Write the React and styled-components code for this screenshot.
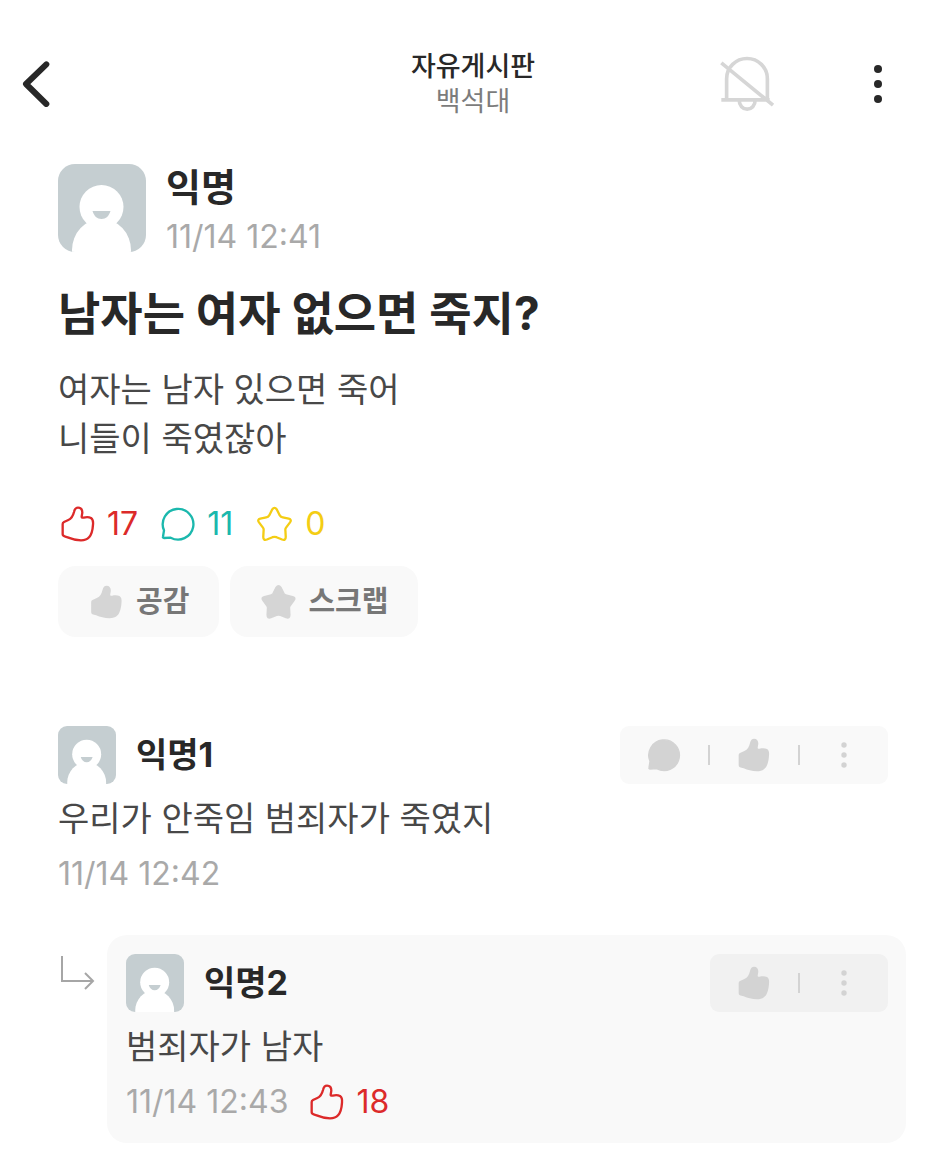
import React from "react";
import styled, { createGlobalStyle } from "styled-components";

const THUMB = "M5 54 Q5 50 9 48 L22 42 C32 38 36 30 39 18 C41 9 45 5 51 5 C60 5 64 11 64 20 L62 32 C62 35 64 35 68 35 C75 33 84 33 90 36 C96 40 97 46 96 56 C95 72 91 87 84 94 C78 101 70 103 60 103 C44 102 32 99 20 94 C10 91 5 91 5 85 Z";
const BUBBLE = "M9 70 A46 46 0 1 1 29 92 L9 93 Q5 93 6 89 Z";
const STAR = "M49 10 Q56 0 63 10 L72 28 Q75 33 81 34 L99 38 Q109 41 103 49 L91 65 Q88 69 89 74 L90 93 Q90 105 79 101 L62 94 Q56 92 50 94 L33 101 Q22 105 22 93 L23 74 Q24 69 21 65 L9 49 Q3 41 13 38 L31 34 Q37 33 40 28 Z";

const shapes = {
	thumb: { box: "0 0 102 108", d: THUMB, width: 34, height: 36, edge: 0 },
	bubble: { box: "0 0 102 102", d: BUBBLE, width: 34, height: 34, edge: 4 },
	star: { box: "0 0 112 108", d: STAR, width: 37, height: 36, edge: 5 },
};

const Icon = ({ name, filled }) => {
	const { box, d, width, height, edge } = shapes[name];
	return (
		<svg width={width} height={height} viewBox={box} aria-hidden="true">
			<path
				d={d}
				fill={filled ? "currentColor" : "none"}
				stroke="currentColor"
				strokeWidth={filled ? edge : 7}
				strokeLinejoin="round"
			/>
		</svg>
	);
};

const Dots = ({ radius, step }) => (
	<svg width="40" height="46" viewBox="0 0 40 46" fill="currentColor" aria-hidden="true">
		<circle cx="20" cy={23 - step} r={radius}/>
		<circle cx="20" cy="23" r={radius}/>
		<circle cx="20" cy={23 + step} r={radius}/>
	</svg>
);

const Avatar = ({ large }) => (
	<AvatarBox $large={large} viewBox="0 0 88 88" aria-hidden="true">
		<rect width="88" height="88" fill="#c5ced1"/>
		<circle cx="43.5" cy="43" r="22" fill="#ffffff"/>
		<ellipse cx="43.5" cy="86" rx="29.5" ry="31" fill="#ffffff"/>
		<path d="M34.5 47 H52.5 C51 52 48 55 43.5 55 C39 55 36 52 34.5 47 Z" fill="#c5ced1"/>
	</AvatarBox>
);

const Comment = ({ name, text, time, likes, reply }) => (
	<article>
		<CommentHead>
			<Avatar/>
			<CommentName>{name}</CommentName>
			<Toolbar $reply={reply}>
				{!reply && (
					<React.Fragment>
						<ToolButton aria-label="대댓글"><Icon name="bubble" filled/></ToolButton>
						<Divider/>
					</React.Fragment>
				)}
				<ToolButton aria-label="공감"><Icon name="thumb" filled/></ToolButton>
				<Divider/>
				<ToolButton aria-label="더보기"><Dots radius={2.7} step={10}/></ToolButton>
			</Toolbar>
		</CommentHead>
		<CommentText>{text}</CommentText>
		<CommentMeta>
			<Time>{time}</Time>
			{likes && <Stat $color="#dc2a2a"><Icon name="thumb"/>{likes}</Stat>}
		</CommentMeta>
	</article>
);

const App = () => (
	<Page>
		<GlobalStyle/>
		<Header>
			<BackButton aria-label="뒤로">
				<svg width="30" height="46" viewBox="0 0 90 138" fill="none" stroke="currentColor" strokeWidth="18" strokeLinecap="round" strokeLinejoin="round" aria-hidden="true">
					<path d="M73 10 L12 69 L73 129"/>
				</svg>
			</BackButton>
			<HeaderTitle>
				<BoardName>자유게시판</BoardName>
				<SchoolName>백석대</SchoolName>
			</HeaderTitle>
			<HeaderActions>
				<BellButton aria-label="알림 꺼짐">
					<svg width="55" height="56" viewBox="0 0 166 168" fill="none" stroke="currentColor" strokeWidth="11" aria-hidden="true">
						<path d="M20 132 V68 A61.5 61 0 0 1 143 68 V132 M4 132 H150 M4 20 L160 148 M58 134 a24 26 0 0 0 48 0"/>
					</svg>
				</BellButton>
				<IconButton aria-label="메뉴"><Dots radius={4} step={15}/></IconButton>
			</HeaderActions>
		</Header>
		<Main>
			<Post>
				<Author>
					<Avatar large/>
					<AuthorText>
						<AuthorName>익명</AuthorName>
						<Time>11/14 12:41</Time>
					</AuthorText>
				</Author>
				<PostTitle>남자는 여자 없으면 죽지?</PostTitle>
				<PostBody>여자는 남자 있으면 죽어<br/>니들이 죽였잖아</PostBody>
				<Stats>
					<Stat $color="#dc2a2a"><Icon name="thumb"/>17</Stat>
					<Stat $color="#1bb8ad"><Icon name="bubble"/>11</Stat>
					<Stat $color="#f4cd14"><Icon name="star"/>0</Stat>
				</Stats>
				<Actions>
					<ActionButton><Icon name="thumb" filled/><span>공감</span></ActionButton>
					<ActionButton><Icon name="star" filled/><span>스크랩</span></ActionButton>
				</Actions>
			</Post>
			<CommentRow>
				<Comment name="익명1" text="우리가 안죽임 범죄자가 죽였지" time="11/14 12:42"/>
			</CommentRow>
			<ReplyRow>
				<svg width="36" height="36" viewBox="0 0 36 36" fill="none" stroke="#a6a6a6" strokeWidth="2" aria-hidden="true">
					<path d="M2 1 V26 H33 M25 18 L33 26 L25 34"/>
				</svg>
				<ReplyCard>
					<Comment reply name="익명2" text="범죄자가 남자" time="11/14 12:43" likes="18"/>
				</ReplyCard>
			</ReplyRow>
		</Main>
	</Page>
);

export default App;

const GlobalStyle = createGlobalStyle`
	body {
		margin: 0;
		background-color: #ffffff;
	}
	* {
		box-sizing: border-box;
	}
	h1, h2, h3, p {
		margin: 0;
	}
	svg {
		display: block;
		flex-shrink: 0;
	}
	button {
		border: none;
		padding: 0;
		margin: 0;
		background: none;
		color: inherit;
		font: inherit;
		cursor: pointer;
	}
`

const Page = styled.div`
	font-family: "Inter", "Noto Sans CJK KR", sans-serif;
	color: #282828;
	padding-bottom: 20px;
`

const Header = styled.header`
	display: grid;
	grid-template-columns: 1fr auto 1fr;
	align-items: center;
	padding: 49px 22px 0px 22px;
`

const IconButton = styled.button`
	display: flex;
	align-items: center;
	justify-content: center;
`

const BackButton = styled(IconButton)`
	justify-self: start;
`

const BellButton = styled(IconButton)`
	color: #d6d6d6;
`

const HeaderTitle = styled.div`
	text-align: center;
	font-size: 27px;
	line-height: 35px;
`

const BoardName = styled.h2`
	font-size: 27px;
	font-weight: 500;
`

const SchoolName = styled.p`
	color: #7c7c7c;
`

const HeaderActions = styled.div`
	display: flex;
	align-items: center;
	justify-content: flex-end;
	gap: 83px;
	padding-right: 26px;
`

const Main = styled.main`
	padding: 45px 40px 0px 58px;
`

const Post = styled.article`
	padding-right: 18px;
`

const AvatarBox = styled.svg`
	width: ${props => props.$large ? "88px" : "58px"};
	height: ${props => props.$large ? "88px" : "58px"};
	border-radius: ${props => props.$large ? "17px" : "9px"};
`

const Author = styled.div`
	display: flex;
	gap: 20px;
`

const AuthorText = styled.div`
	display: flex;
	flex-direction: column;
	gap: 7px;
`

const AuthorName = styled.h3`
	font-size: 38px;
	line-height: 46px;
	font-weight: 700;
`

const Time = styled.time`
	font-size: 32px;
	line-height: 40px;
	color: #a9a9a9;
`

const PostTitle = styled.h1`
	margin-top: 26px;
	font-size: 46px;
	line-height: 60px;
	font-weight: 700;
`

const PostBody = styled.p`
	margin-top: 22px;
	font-size: 34px;
	line-height: 49px;
	color: #484848;
`

const Stats = styled.div`
	display: flex;
	gap: 23px;
	margin-top: 41px;
	padding-left: 3px;
`

const Stat = styled.span`
	display: flex;
	align-items: center;
	gap: 12px;
	font-size: 32px;
	line-height: 40px;
	color: ${props => props.$color};
`

const Actions = styled.div`
	display: flex;
	gap: 11px;
	margin-top: 22px;
`

const ActionButton = styled.button`
	display: flex;
	align-items: center;
	gap: 11px;
	height: 71px;
	padding: 0px 30px;
	border-radius: 18px;
	background-color: #f9f9f9;
	color: #d5d5d5;
	svg {
		min-width: 37px;
	}
	span {
		font-size: 29px;
		line-height: 40px;
		font-weight: 700;
		color: #777777;
	}
`

const CommentRow = styled.section`
	margin-top: 89px;
	padding-right: 18px;
`

const ReplyRow = styled.section`
	display: flex;
	align-items: flex-start;
	gap: 11px;
	margin-top: 41px;
	> svg {
		margin: 20px 0px 0px 2px;
	}
`

const ReplyCard = styled.div`
	flex: 1;
	padding: 19px 18px 21px 19px;
	border-radius: 20px;
	background-color: #f9f9f9;
`

const CommentHead = styled.div`
	display: flex;
	align-items: center;
	gap: 20px;
`

const CommentName = styled.h3`
	flex: 1;
	font-size: 34px;
	line-height: 44px;
	font-weight: 700;
`

const Toolbar = styled.div`
	display: flex;
	align-items: center;
	height: 58px;
	border-radius: 9px;
	background-color: ${props => props.$reply ? "#f1f1f1" : "#f9f9f9"};
	color: #d3d3d3;
`

const ToolButton = styled.button`
	display: flex;
	align-items: center;
	justify-content: center;
	width: 88px;
	height: 58px;
`

const Divider = styled.span`
	width: 2px;
	height: 20px;
	background-color: #d3d3d3;
`

const CommentText = styled.p`
	margin-top: 10px;
	font-size: 34px;
	line-height: 49px;
	color: #484848;
`

const CommentMeta = styled.div`
	display: flex;
	align-items: center;
	gap: 22px;
	margin-top: 11px;
`
